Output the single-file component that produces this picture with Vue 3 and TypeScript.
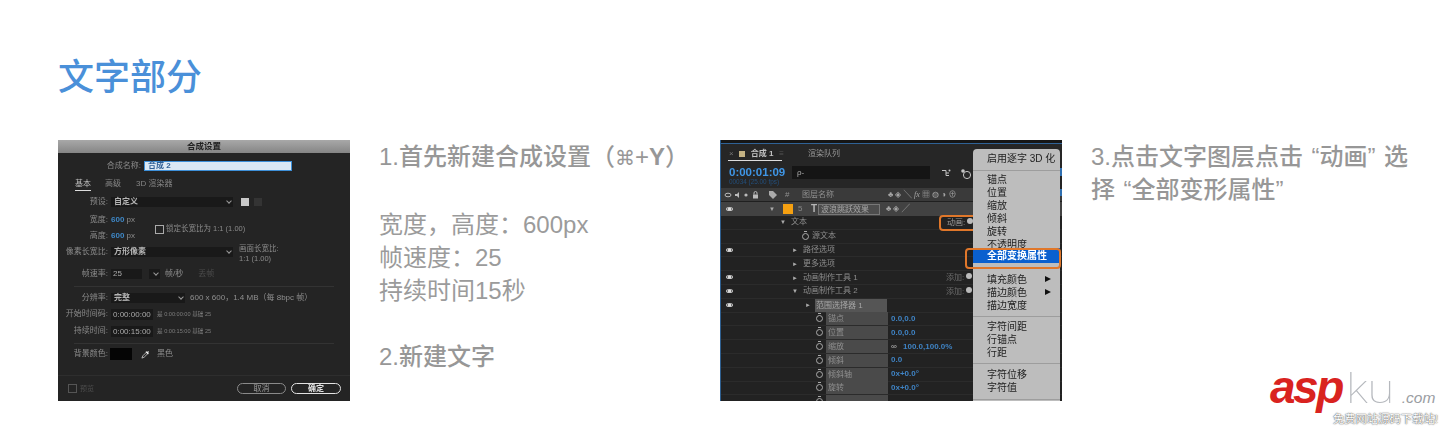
<script setup lang="ts">
interface Row {
  text: string
  indent: number
  eye?: boolean
  arrow?: string
  watch?: boolean
  kind?: 'plain' | 'group' | 'prop'
  value?: string
  link?: boolean
  add?: boolean
}

const rows: Row[] = [
  { text: '文本', indent: 59, arrow: '▼' },
  { text: '源文本', indent: 81, watch: true },
  { text: '路径选项', indent: 71, arrow: '►', eye: true },
  { text: '更多选项', indent: 71, arrow: '►' },
  { text: '动画制作工具 1', indent: 71, arrow: '►', eye: true, add: true },
  { text: '动画制作工具 2', indent: 71, arrow: '▼', eye: true, add: true },
  { text: '范围选择器 1', indent: 84, arrow: '►', eye: true, kind: 'group' },
  { text: '锚点', indent: 95, watch: true, kind: 'prop', value: '0.0,0.0' },
  { text: '位置', indent: 95, watch: true, kind: 'prop', value: '0.0,0.0' },
  { text: '缩放', indent: 95, watch: true, kind: 'prop', value: '100.0,100.0%', link: true },
  { text: '倾斜', indent: 95, watch: true, kind: 'prop', value: '0.0' },
  { text: '倾斜轴', indent: 95, watch: true, kind: 'prop', value: '0x+0.0°' },
  { text: '旋转', indent: 95, watch: true, kind: 'prop', value: '0x+0.0°' },
  { text: '', indent: 95, watch: true, kind: 'prop' },
]

interface MenuItem {
  text?: string
  sep?: string
  sub?: boolean
  active?: boolean
  clip?: boolean
}

const menu: MenuItem[] = [
  { text: '启用逐字 3D 化' },
  { sep: 's1' },
  { text: '锚点' },
  { text: '位置' },
  { text: '缩放' },
  { text: '倾斜' },
  { text: '旋转' },
  { text: '不透明度', clip: true },
  { text: '全部变换属性', active: true },
  { text: '填充颜色', sub: true },
  { text: '描边颜色', sub: true },
  { text: '描边宽度' },
  { sep: 's2' },
  { text: '字符间距' },
  { text: '行锚点' },
  { text: '行距' },
  { sep: 's3' },
  { text: '字符位移' },
  { text: '字符值' },
  { sep: 's4' },
]
</script>

<template>
  <div class="page">
    <h1 class="title">文字部分</h1>
    <div class="content">
      <div class="dialog shot">
        <div class="d-title">合成设置</div>
        <div class="d-row name-row">
          <span class="lbl">合成名称:</span>
          <span class="name-input">合成 2</span>
        </div>
        <div class="tabs">
          <span class="tab on">基本</span>
          <span class="tab">高级</span>
          <span class="tab">3D 渲染器</span>
        </div>
        <div class="d-row preset-row">
          <span class="lbl">预设:</span>
          <span class="sel wide">自定义<i class="chev"></i></span>
          <span class="mini light"></span>
          <span class="mini"></span>
        </div>
        <div class="d-row size-row">
          <span class="lbl">宽度:</span>
          <span class="num">600 <em>px</em></span>
        </div>
        <div class="d-row height-row">
          <span class="lbl">高度:</span>
          <span class="num">600 <em>px</em></span>
          <span class="lock"><i class="check"></i>锁定长宽比为 1:1 (1.00)</span>
        </div>
        <div class="d-row par-row">
          <span class="lbl">像素长宽比:</span>
          <span class="sel wide">方形像素<i class="chev"></i></span>
          <span class="frame-ratio">画面长宽比:<br />1:1 (1.00)</span>
        </div>
        <div class="d-row fps-row">
          <span class="lbl">帧速率:</span>
          <span class="field short">25</span>
          <span class="sel tiny"><i class="chev"></i></span>
          <span class="note">帧/秒</span>
          <span class="note dim">丢帧</span>
        </div>
        <div class="rule rule-a"></div>
        <div class="d-row res-row">
          <span class="lbl">分辨率:</span>
          <span class="sel mid">完整<i class="chev"></i></span>
          <span class="note">600 x 600，1.4 MB（每 8bpc 帧）</span>
        </div>
        <div class="d-row start-row">
          <span class="lbl">开始时间码:</span>
          <span class="field time">0:00:00:00</span>
          <span class="small">是 0:00:00:00 基础 25</span>
        </div>
        <div class="d-row dur-row">
          <span class="lbl">持续时间:</span>
          <span class="field time">0:00:15:00</span>
          <span class="small">是 0:00:15:00 基础 25</span>
        </div>
        <div class="rule rule-b"></div>
        <div class="d-row bg-row">
          <span class="lbl">背景颜色:</span>
          <span class="swatch"></span>
          <svg class="dropper" viewBox="0 0 10 10" width="9" height="9">
            <path d="M1 9 L2 6.5 L6 2.5 L7.5 4 L3.5 8 Z" fill="none" stroke="#ccc" stroke-width="0.9" />
            <path d="M5.5 1.8 L8.2 4.5 M6.8 3.2 L8.4 1.6" stroke="#eee" stroke-width="1.5" />
          </svg>
          <span class="note">黑色</span>
        </div>
        <div class="d-foot">
          <span class="preview"><i class="check dim-check"></i>预览</span>
          <span class="btn">取消</span>
          <span class="btn ok">确定</span>
        </div>
      </div>

      <div class="copy first">
        <p class="strong">1.首先新建合成设置（<span class="cmd">⌘</span>+<b>Y</b>）</p>
        <p class="gap">宽度，高度：600px</p>
        <p>帧速度：25</p>
        <p>持续时间15秒</p>
        <p class="gap strong">2.新建文字</p>
      </div>

      <div class="ae shot">
        <div class="ae-tabs">
          <span class="ae-x">×</span>
          <i class="ae-sq"></i>
          <span class="ae-tab-name">合成 1</span>
          <span class="ae-ham">≡</span>
          <span class="ae-queue">渲染队列</span>
        </div>
        <div class="ae-time">
          <div class="tc">
            <b>0:00:01:09</b>
            <span>00034 (25.00 fps)</span>
          </div>
          <div class="ae-search">ρ‐</div>
          <svg class="ae-tool" viewBox="0 0 10 10" width="10" height="10">
            <path d="M1 2.5h4M5 2.5v5M5 5h3M5 7.5h3" fill="none" stroke="#c4c4c4" stroke-width="1" />
            <circle cx="8.5" cy="2.5" r="1" fill="#c4c4c4" />
          </svg>
          <svg class="ae-tool gear" viewBox="0 0 12 12" width="12" height="12">
            <circle cx="3" cy="3" r="1.8" fill="#c4c4c4" />
            <circle cx="7" cy="7" r="3.6" fill="none" stroke="#c4c4c4" stroke-width="1" />
          </svg>
        </div>
        <div class="ae-head">
          <svg class="head-left" viewBox="0 0 42 10" width="42" height="10">
            <ellipse cx="4" cy="5" rx="3" ry="1.8" fill="none" stroke="#bbb" />
            <path d="M11 4h2l2-2v6l-2-2h-2z" fill="#bbb" />
            <circle cx="22" cy="5" r="1.6" fill="#bbb" />
            <rect x="29" y="4.5" width="5" height="4" fill="#bbb" />
            <path d="M30 4.5v-1.5a1.5 1.5 0 0 1 3 0v1.5" fill="none" stroke="#bbb" />
          </svg>
          <svg class="tag" viewBox="0 0 10 10" width="10" height="10">
            <path d="M1 1h4l4 4-4 4-4-4z" fill="#aaa" />
          </svg>
          <span class="hash">#</span>
          <span class="head-name">图层名称</span>
          <span class="head-switch">♣ ◈ ╲ <i>fx</i> ▦ ◍ ◑ ⊕</span>
        </div>
        <div class="ae-layer">
          <i class="eye"></i>
          <span class="tri">▼</span>
          <i class="label-chip"></i>
          <span class="idx">5</span>
          <b class="t">T</b>
          <span class="layer-name">波浪跳跃效果</span>
          <span class="layer-switch">♣ ◈ ╱</span>
        </div>
        <div v-for="(r, i) in rows" :key="i" class="ae-row">
          <i v-if="r.eye" class="eye row-eye"></i>
          <div class="row-main" :style="{ paddingLeft: r.indent + 'px' }">
            <span v-if="r.arrow" class="tri">{{ r.arrow }}</span>
            <i v-if="r.watch" class="watch"></i>
            <span class="row-name" :class="r.kind">{{ r.text }}</span>
            <i v-if="r.link" class="link">∞</i>
            <span v-if="r.value" class="val">{{ r.value }}</span>
            <span v-if="r.add" class="add">添加: <i class="dot"></i></span>
          </div>
        </div>
        <span class="anim">动画: <i class="dot"></i></span>
        <span class="ring ring-anim"></span>

        <div class="ae-menu">
          <template v-for="(m, i) in menu" :key="i">
            <div v-if="m.sep" class="m-sep" :class="m.sep"></div>
            <div v-else class="m-item" :class="{ active: m.active, clip: m.clip }">
              {{ m.text }}<i v-if="m.sub" class="m-arrow"></i>
            </div>
          </template>
        </div>
        <span class="edge"></span>
        <span class="ring ring-menu"></span>
      </div>

      <div class="copy third">
        <p class="strong">3.点击文字图层点击<span class="q open">“</span>动画<span class="q">”</span>选<br />择<span class="q open">“</span>全部变形属性<span class="q">”</span></p>
      </div>
    </div>

    <div class="mark">
      <div class="mark-top">
        <span class="asp">asp</span><span class="ku">ku</span><span class="com">.com</span>
      </div>
      <div class="mark-sub">免费网站源码下载站!</div>
    </div>
  </div>
</template>

<style>
html,
body {
  margin: 0;
  background: #fff;
}
</style>

<style scoped>
.page {
  position: relative;
  width: 1440px;
  height: 430px;
  overflow: hidden;
  background: #fff;
  font-family: "Liberation Sans", "Noto Sans CJK SC", sans-serif;
}
.title {
  margin: 0;
  padding: 56px 0 0 58px;
  height: 140px;
  box-sizing: border-box;
  font-size: 36px;
  line-height: 44px;
  font-weight: 500;
  color: #4a90d9;
}
.content {
  display: flex;
  align-items: flex-start;
  padding-left: 58px;
}
.shot {
  filter: blur(0.45px);
  flex: none;
}
.copy {
  flex: none;
  font-size: 24px;
  line-height: 33px;
  color: #9b9b9b;
}
.copy p {
  margin: 0;
}
.copy .gap {
  margin-top: 33px;
}
.copy .strong {
  font-weight: 500;
  color: #979797;
}
.cmd {
  font-family: "DejaVu Sans", sans-serif;
  font-size: 20px;
}
.q {
  display: inline-block;
  width: 16.5px;
  text-align: left;
}
.q.open {
  text-align: right;
}
.first {
  width: 312px;
  margin-left: 29px;
  margin-right: 29px;
  white-space: nowrap;
}
.third {
  width: 320px;
  margin-left: 29px;
  white-space: nowrap;
}

/* composition dialog */
.dialog {
  width: 292px;
  height: 261px;
  background: #242424;
  color: #9d9d9d;
  font-size: 8px;
  line-height: 10px;
  position: relative;
}
.d-title {
  height: 13px;
  line-height: 13px;
  text-align: center;
  font-size: 8.5px;
  font-weight: 700;
  color: #222;
  background: linear-gradient(#a8a8a8, #858585);
}
.d-row {
  display: flex;
  align-items: center;
  height: 10px;
}
.lbl {
  flex: none;
  width: 50px;
  margin-right: 3px;
  text-align: right;
  white-space: nowrap;
  color: #8a8a8a;
}
.name-row {
  margin-top: 8px;
  padding-left: 33px;
}
.name-row .lbl {
  width: 50px;
  margin-right: 3px;
}
.name-input {
  width: 148px;
  height: 10px;
  box-sizing: border-box;
  padding-left: 3px;
  background: #dbe8f4;
  border: 1px solid #3d8fd8;
  color: #2f5f95;
  font-weight: 700;
  line-height: 8px;
}
.tabs {
  display: flex;
  height: 12px;
  margin-top: 8px;
  padding-left: 17px;
  gap: 14px;
}
.tab {
  color: #858585;
}
.tab.on {
  color: #bdbdbd;
  border-bottom: 1px solid #ddd;
}
.tab:last-child {
  margin-left: 1px;
}
.preset-row {
  margin-top: 6px;
}
.sel {
  position: relative;
  display: block;
  height: 10px;
  box-sizing: border-box;
  padding-left: 3px;
  background: #191919;
  color: #b5b5b5;
  font-weight: 700;
  flex: none;
}
.wide {
  width: 122px;
}
.mid {
  width: 74px;
}
.tiny {
  width: 11px;
  margin-left: 7px;
}
.chev {
  position: absolute;
  right: 2px;
  top: 2px;
  width: 3px;
  height: 3px;
  border-right: 1px solid #999;
  border-bottom: 1px solid #999;
  transform: rotate(45deg);
}
.mini {
  width: 8px;
  height: 8px;
  margin-left: 5px;
  background: #343434;
}
.mini.light {
  margin-left: 8px;
  background: #c9c9c9;
}
.size-row {
  margin-top: 8px;
}
.height-row {
  margin-top: 6px;
}
.num {
  color: #3e87c6;
  font-weight: 700;
  white-space: nowrap;
}
.num em {
  font-style: normal;
  font-weight: 400;
  color: #8d8d8d;
}
.lock {
  display: flex;
  align-items: center;
  gap: 2px;
  margin: -14px 0 0 20px;
  white-space: nowrap;
  color: #8a8a8a;
  font-size: 7.5px;
}
.check {
  display: block;
  width: 7px;
  height: 7px;
  border: 1px solid #aaa;
}
.par-row {
  margin-top: 6px;
}
.frame-ratio {
  margin: 3px 0 0 6px;
  font-size: 7.5px;
  white-space: nowrap;
  color: #8a8a8a;
}
.fps-row {
  margin-top: 12px;
}
.field {
  display: block;
  flex: none;
  background: #191919;
  color: #aaa;
  padding-left: 2px;
  box-sizing: border-box;
}
.short {
  width: 31px;
  height: 10px;
}
.note {
  margin-left: 5px;
  white-space: nowrap;
  color: #8f8f8f;
}
.note.dim {
  margin-left: 15px;
  color: #4c4c4c;
}
.rule {
  height: 1px;
  margin: 0 16px;
  background: #333;
}
.rule-a {
  margin-top: 7px;
}
.res-row {
  margin-top: 6px;
}
.start-row {
  margin-top: 6px;
}
.dur-row {
  margin-top: 7px;
}
.time {
  width: 42px;
  height: 11px;
  line-height: 11px;
  font-size: 8px;
  white-space: nowrap;
}
.small {
  margin-left: 4px;
  white-space: nowrap;
  font-size: 5.6px;
  color: #7d7d7d;
}
.rule-b {
  margin-top: 7px;
}
.bg-row {
  height: 12px;
  margin-top: 4px;
}
.bg-row .lbl {
  margin-right: 2px;
}
.swatch {
  width: 22px;
  height: 12px;
  background: #050505;
  flex: none;
}
.dropper {
  margin-left: 9px;
}
.bg-row .note {
  margin-left: 7px;
}
.d-foot {
  position: absolute;
  left: 0;
  right: 0;
  bottom: 0;
  height: 26px;
  box-sizing: border-box;
  border-top: 1px solid #2e2e2e;
  display: flex;
  align-items: center;
  padding: 0 9px 0 10px;
}
.preview {
  display: flex;
  align-items: center;
  gap: 3px;
  margin-right: auto;
  color: #4d4d4d;
  font-size: 7px;
}
.dim-check {
  border-color: #555;
}
.btn {
  width: 49px;
  height: 11px;
  line-height: 9px;
  box-sizing: border-box;
  text-align: center;
  border: 1px solid #8a8a8a;
  border-radius: 6px;
  margin-left: 5px;
  color: #9a9a9a;
}
.btn.ok {
  width: 50px;
  border-color: #e2e2e2;
  color: #e2e2e2;
  font-weight: 700;
}

/* layer panel */
.ae {
  position: relative;
  width: 342px;
  height: 261px;
  box-sizing: border-box;
  background: #232323;
  border-left: 1px solid #2f5f8f;
  overflow: hidden;
  color: #8e8e8e;
  font-size: 8px;
  line-height: 10px;
}
.ae-tabs {
  position: relative;
  display: flex;
  align-items: center;
  height: 21px;
  box-sizing: border-box;
  padding: 4px 0 0 8px;
  background: #262626;
  border-top: 3px solid #161616;
  box-shadow: inset 0 1px 0 #2f6296;
}
.ae-tabs::after {
  content: "";
  position: absolute;
  left: 7px;
  bottom: 0;
  width: 54px;
  height: 1px;
  background: #ddd;
}
.ae-x {
  color: #777;
}
.ae-sq {
  width: 6px;
  height: 6px;
  margin-left: 5px;
  background: #c4b283;
}
.ae-tab-name {
  margin-left: 6px;
  font-weight: 700;
  color: #c3c3c3;
}
.ae-ham {
  margin-left: 6px;
  color: #555;
}
.ae-queue {
  margin-left: 24px;
  color: #9a9a9a;
}
.ae-time {
  display: flex;
  align-items: flex-start;
  height: 27px;
  padding: 5px 0 0 8px;
  box-sizing: border-box;
  background: #262626;
}
.tc {
  width: 63px;
  flex: none;
}
.tc b {
  display: block;
  font-size: 11.5px;
  line-height: 12px;
  color: #3f96e6;
}
.tc span {
  display: block;
  font-size: 6.4px;
  line-height: 8px;
  color: #234f7c;
  white-space: nowrap;
}
.ae-search {
  width: 138px;
  height: 13px;
  line-height: 13px;
  padding-left: 5px;
  box-sizing: border-box;
  background: #151515;
  color: #aaa;
  flex: none;
}
.ae-tool {
  flex: none;
  margin: 2px 0 0 11px;
}
.ae-tool.gear {
  margin-left: 9px;
}
.ae-head {
  display: flex;
  align-items: center;
  height: 13px;
  background: #3a3a3a;
  border-bottom: 1px solid #202020;
  padding-left: 3px;
  color: #8f8f8f;
}
.head-left {
  flex: none;
  margin-right: 2px;
}
.tag {
  flex: none;
  margin-right: 7px;
}
.hash {
  width: 17px;
}
.head-name {
  width: 86px;
}
.head-switch {
  white-space: nowrap;
  font-size: 8px;
  color: #a5a5a5;
}
.head-switch i {
  font-family: "Liberation Serif", serif;
}
.ae-layer {
  position: relative;
  display: flex;
  align-items: center;
  height: 14px;
  background: #424242;
  padding-left: 5px;
}
.eye {
  display: block;
  width: 7px;
  height: 4px;
  border: 1px solid #c8c8c8;
  border-radius: 50%;
  background: radial-gradient(circle, #ddd 0 1.2px, transparent 1.4px);
  box-sizing: border-box;
  flex: none;
}
.ae-layer .tri {
  margin-left: 36px;
  width: 9px;
}
.tri {
  font-size: 6px;
  color: #aaa;
  margin-right: 5px;
}
.label-chip {
  width: 10px;
  height: 10px;
  background: #f5a011;
  flex: none;
  margin-left: 0;
}
.idx {
  margin-left: 5px;
  color: #888;
  width: 13px;
}
.t {
  color: #b5b5b5;
  font-size: 10px;
  width: 7px;
  margin-right: 0;
}
.layer-name {
  width: 62px;
  height: 11px;
  line-height: 9px;
  box-sizing: border-box;
  padding-left: 2px;
  border: 1px solid #777;
  background: #4d4d4d;
  color: #a5a5a5;
  white-space: nowrap;
  flex: none;
}
.layer-switch {
  margin-left: 6px;
  white-space: nowrap;
  color: #a5a5a5;
}
.ae-row {
  position: relative;
  height: 13.8px;
  box-sizing: border-box;
  border-bottom: 1px solid #2b2b2b;
  background: #222;
}
.row-eye {
  position: absolute;
  left: 5px;
  top: 4px;
}
.row-main {
  display: flex;
  align-items: center;
  height: 100%;
  position: relative;
}
.watch {
  position: relative;
  width: 7px;
  height: 7px;
  box-sizing: border-box;
  border: 1px solid #aaa;
  border-radius: 50%;
  margin-right: 3px;
  flex: none;
}
.watch::before {
  content: "";
  position: absolute;
  left: 1px;
  top: -3px;
  width: 3px;
  height: 1px;
  background: #aaa;
}
.row-name {
  white-space: nowrap;
  color: #8c8c8c;
}
.row-name.group {
  width: 72px;
  height: 13px;
  line-height: 13px;
  background: #555;
  padding-left: 1px;
  box-sizing: border-box;
  margin-left: -1px;
  color: #a5a5a5;
}
.row-name.prop {
  width: 62px;
  height: 13px;
  line-height: 13px;
  background: #4a4a4a;
  padding-left: 2px;
  box-sizing: border-box;
  color: #8f8f8f;
}
.link {
  font-style: normal;
  margin-left: 3px;
  color: #bbb;
  width: 9px;
}
.val {
  margin-left: 3px;
  color: #3f83c4;
  font-weight: 700;
  white-space: nowrap;
}
.add {
  position: absolute;
  left: 225px;
  top: 2px;
  white-space: nowrap;
  color: #6c6c6c;
}
.dot {
  display: inline-block;
  width: 6px;
  height: 6px;
  border-radius: 50%;
  background: #bbb;
  vertical-align: 1px;
}
.anim {
  position: absolute;
  left: 226px;
  top: 78px;
  color: #9a9a9a;
  white-space: nowrap;
}
.ring {
  position: absolute;
  box-sizing: border-box;
  border: 2px solid #e0772a;
  border-radius: 4px;
}
.ring-anim {
  left: 218px;
  top: 75px;
  width: 40px;
  height: 16px;
}
.edge {
  position: absolute;
  right: 0;
  top: 28px;
  width: 2px;
  height: 28px;
  background: linear-gradient(#2f6fb0 0 8px, #232323 8px 21px, #2f6fb0 21px);
}
.ae-menu {
  position: absolute;
  left: 252px;
  top: 9px;
  width: 87px;
  height: 254px;
  box-sizing: border-box;
  padding-top: 3px;
  background: #bdbdbd;
  border-radius: 4px 4px 0 0;
  overflow: hidden;
  color: #222;
  font-size: 10px;
}
.m-item {
  position: relative;
  height: 13px;
  line-height: 13px;
  padding-left: 14px;
  white-space: nowrap;
}
.m-item.clip {
  height: 10px;
  overflow: hidden;
}
.m-item.active {
  height: 15px;
  line-height: 15px;
  margin: 0 0 10px;
  background: #0a60cf;
  color: #fff;
  font-weight: 700;
}
.m-sep {
  height: 1px;
  background: #9d9d9d;
}
.s1 {
  margin: 5px 0 2px;
}
.s2 {
  margin: 4px 0 3px;
}
.s3 {
  margin: 4px 0 4px;
}
.s4 {
  margin: 5px 0 4px;
}
.m-arrow {
  position: absolute;
  right: 9px;
  top: 3px;
  border-left: 6px solid #111;
  border-top: 3.5px solid transparent;
  border-bottom: 3.5px solid transparent;
}
.ring-menu {
  left: 244px;
  top: 108px;
  width: 96px;
  height: 21px;
  border-width: 2.5px;
}

/* watermark */
.mark {
  position: absolute;
  left: 1270px;
  top: 365px;
  width: 170px;
}
.mark-top {
  display: flex;
  align-items: baseline;
  height: 44px;
  white-space: nowrap;
}
.asp {
  font-size: 46px;
  line-height: 44px;
  font-style: italic;
  font-weight: 700;
  letter-spacing: -2.5px;
  color: #d9231f;
}
.ku {
  display: inline-block;
  width: 56px;
  font-family: "Noto Sans", sans-serif;
  font-weight: 100;
  font-size: 41px;
  line-height: 44px;
  margin-left: 4px;
  transform: scaleX(1.15);
  transform-origin: left bottom;
  color: #b5b8bd;
}
.com {
  font-size: 15.5px;
  font-style: italic;
  color: #9a9da2;
}
.mark-sub {
  margin: 3px 0 0 63px;
  font-size: 11.3px;
  line-height: 14px;
  white-space: nowrap;
  color: #fff;
  text-shadow: 0 0 1.5px #555, 0 0 1px #555;
}
</style>
